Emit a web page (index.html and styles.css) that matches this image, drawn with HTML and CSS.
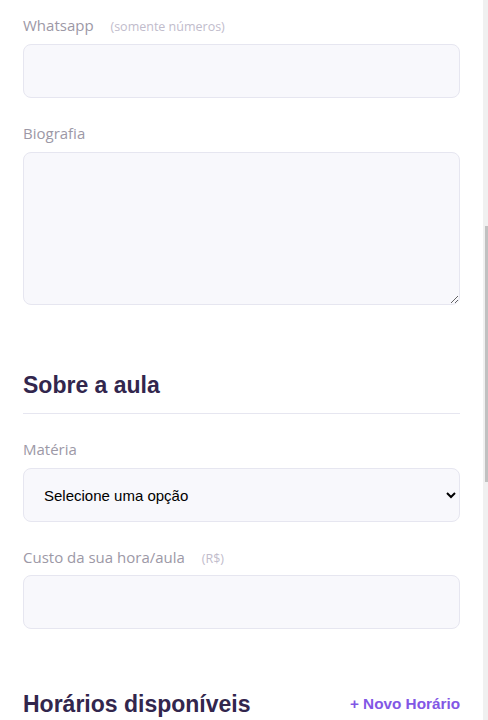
FILE: index.html
```html
<!DOCTYPE html>
<html lang="pt-BR">
<head>
<meta charset="utf-8">
<title>Proffy - Formulário</title>
<link rel="stylesheet" href="styles.css">
</head>
<body>
<div class="page">
  <main class="form">
    <div class="field">
      <label class="label" for="whatsapp">Whatsapp <span class="hint">(somente números)</span></label>
      <input class="input" id="whatsapp" type="text">
    </div>
    <div class="field">
      <label class="label" for="bio">Biografia</label>
      <textarea class="textarea" id="bio"></textarea>
    </div>

    <h2 class="section-title">Sobre a aula</h2>

    <div class="field">
      <label class="label" for="subject">Matéria</label>
      <select class="select" id="subject">
        <option>Selecione uma opção</option>
      </select>
    </div>
    <div class="field">
      <label class="label label-tight" for="cost">Custo da sua hora/aula <span class="hint">(R$)</span></label>
      <input class="input" id="cost" type="text">
    </div>

    <div class="section-row">
      <h2 class="section-title-inline">Horários disponíveis</h2>
      <button class="add-btn" type="button">+ Novo Horário</button>
    </div>
  </main>
  <div class="scrollbar"><div class="thumb"></div></div>
</div>
</body>
</html>
```
FILE: styles.css
```css
* { box-sizing: border-box; }
html, body {
  margin: 0;
  padding: 0;
  height: 720px;
  overflow: hidden;
  background: #ffffff;
}
.page {
  display: flex;
  height: 720px;
}
.form {
  width: 483px;
  padding: 15px 23px 0 23px;
  background: #ffffff;
  font-family: "Open Sans", "Noto Sans", sans-serif;
}
.field {
  display: flex;
  flex-direction: column;
  margin-top: 25px;
}
.form > .field:first-child { margin-top: 0; }
.label {
  display: block;
  height: 20px;
  font-size: 15px;
  line-height: 21px;
  color: #9c98a6;
  margin-bottom: 9px;
  white-space: nowrap;
}
.label-tight { margin-bottom: 8px; }
.hint {
  font-size: 12.5px;
  line-height: 1;
  color: #c1bccc;
  margin-left: 13px;
}
.input, .textarea, .select {
  width: 100%;
  background: #f8f8fc;
  border: 1px solid #e6e6f0;
  border-radius: 8px;
  outline: none;
  font-family: "Liberation Sans", Arial, sans-serif;
  font-size: 15px;
  color: #000;
}
.input { height: 54px; padding: 0 20px; }
.textarea { height: 153px; padding: 12px 20px; resize: vertical; display: block; }
.select { height: 54px; padding: 0 16px; }
.section-title {
  margin: 65px 0 0;
  padding-bottom: 13px;
  border-bottom: 1px solid #e6e6f0;
  font-family: "Liberation Sans", Arial, sans-serif;
  font-weight: 700;
  font-size: 23px;
  line-height: 30px;
  color: #32264d;
}
.section-row {
  display: flex;
  align-items: center;
  justify-content: space-between;
  margin-top: 60px;
}
.section-title-inline {
  margin: 0;
  font-family: "Liberation Sans", Arial, sans-serif;
  font-weight: 700;
  font-size: 23px;
  line-height: 30px;
  color: #32264d;
}
.add-btn {
  border: 0;
  background: none;
  padding: 0;
  font-family: "Liberation Sans", Arial, sans-serif;
  font-weight: 700;
  font-size: 15.3px;
  color: #8257e5;
  cursor: pointer;
}
.scrollbar {
  width: 5px;
  height: 720px;
  background: #f0f0f0;
  padding-left: 2px;
}
.thumb {
  margin-top: 226px;
  width: 3px;
  height: 256px;
  background: #c1c1c1;
}
```
